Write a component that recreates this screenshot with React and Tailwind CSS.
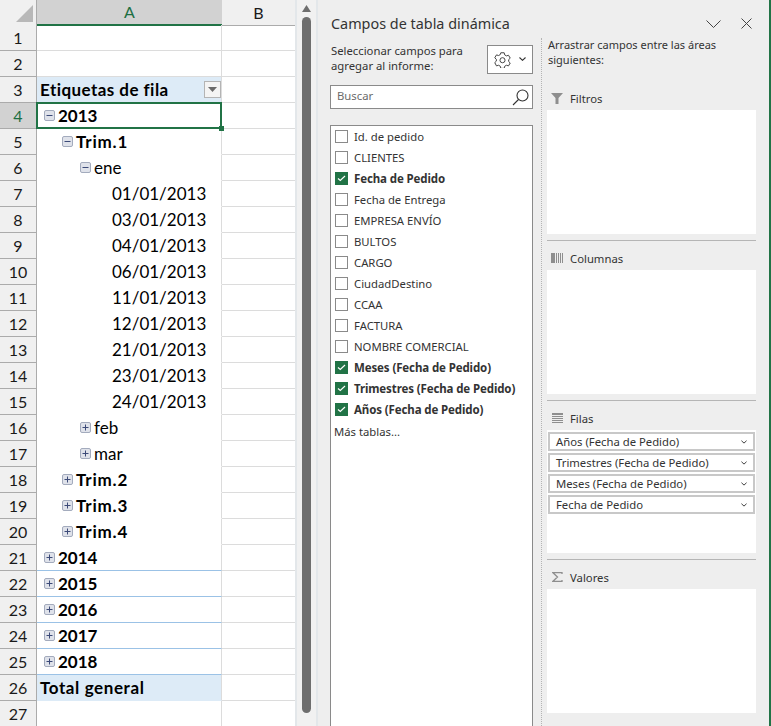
import React from 'react'

const sheetFont = "font-['Lato','Liberation_Sans',sans-serif]"
const panelFont = "font-['Noto_Sans','Liberation_Sans',sans-serif]"

const rows = [
  { n: 1 },
  { n: 2 },
  { n: 3, text: 'Etiquetas de fila', bold: true, track: 'tracking-[0.45px]', fill: true, filter: true },
  { n: 4, text: '2013', bold: true, level: 0, box: 'minus', selected: true },
  { n: 5, text: 'Trim.1', bold: true, track: 'tracking-[0.8px]', level: 1, box: 'minus' },
  { n: 6, text: 'ene', level: 2, box: 'minus' },
  { n: 7, text: '01/01/2013', date: true },
  { n: 8, text: '03/01/2013', date: true },
  { n: 9, text: '04/01/2013', date: true },
  { n: 10, text: '06/01/2013', date: true },
  { n: 11, text: '11/01/2013', date: true },
  { n: 12, text: '12/01/2013', date: true },
  { n: 13, text: '21/01/2013', date: true },
  { n: 14, text: '23/01/2013', date: true },
  { n: 15, text: '24/01/2013', date: true },
  { n: 16, text: 'feb', level: 2, box: 'plus' },
  { n: 17, text: 'mar', level: 2, box: 'plus' },
  { n: 18, text: 'Trim.2', bold: true, track: 'tracking-[0.8px]', level: 1, box: 'plus' },
  { n: 19, text: 'Trim.3', bold: true, track: 'tracking-[0.8px]', level: 1, box: 'plus' },
  { n: 20, text: 'Trim.4', bold: true, track: 'tracking-[0.8px]', level: 1, box: 'plus' },
  { n: 21, text: '2014', bold: true, level: 0, box: 'plus', blue: true },
  { n: 22, text: '2015', bold: true, level: 0, box: 'plus', blue: true },
  { n: 23, text: '2016', bold: true, level: 0, box: 'plus', blue: true },
  { n: 24, text: '2017', bold: true, level: 0, box: 'plus', blue: true },
  { n: 25, text: '2018', bold: true, level: 0, box: 'plus', blue: true },
  { n: 26, text: 'Total general', bold: true, track: 'tracking-[0.6px]', fill: true },
  { n: 27 },
]

const fields = [
  { label: 'Id. de pedido' },
  { label: 'CLIENTES' },
  { label: 'Fecha de Pedido', on: true },
  { label: 'Fecha de Entrega' },
  { label: 'EMPRESA ENVÍO' },
  { label: 'BULTOS' },
  { label: 'CARGO' },
  { label: 'CiudadDestino' },
  { label: 'CCAA' },
  { label: 'FACTURA' },
  { label: 'NOMBRE COMERCIAL' },
  { label: 'Meses (Fecha de Pedido)', on: true },
  { label: 'Trimestres (Fecha de Pedido)', on: true },
  { label: 'Años (Fecha de Pedido)', on: true },
]

const filas = [
  'Años (Fecha de Pedido)',
  'Trimestres (Fecha de Pedido)',
  'Meses (Fecha de Pedido)',
  'Fecha de Pedido',
]

// indent of the outline boxes, one step per pivot level
const levelPad = ['pl-[7px]', 'pl-[25px]', 'pl-[43px]']

function OutlineBox({ type }) {
  return (
    <svg width="11" height="11" viewBox="0 0 11 11" className="shrink-0 mr-[3px]">
      <rect x="0.5" y="0.5" width="10" height="10" rx="1.5" fill="#dfe2ea" stroke="#a3abbd" />
      <path d="M2.5 5.5h6" stroke="#3c4a78" />
      {type === 'plus' && <path d="M5.5 2.5v6" stroke="#3c4a78" />}
    </svg>
  )
}

function Row({ row }) {
  const { n, text, bold, track, fill, filter, level, box, selected, date, blue } = row
  let gridLine = 'border-b-white'
  if (n <= 2) gridLine = 'border-b-[#dcdcdc]'
  if (fill) gridLine = 'border-b-[#ddebf7]'
  if (blue) gridLine = 'border-b-[#9bc2e6]'
  return (
    <>
      <div
        className={`flex items-center justify-center h-[26px] border-b border-r border-[#ababab] text-[16px] ${
          selected ? 'bg-[#d2d2d2] text-[#1d6f42]' : 'bg-[#f0f0f0] text-[#1a1a1a]'
        }`}
      >
        {n}
      </div>
      <div
        className={`relative flex items-center h-[26px] border-b border-r border-r-[#dcdcdc] text-[17px] text-black ${gridLine} ${
          fill ? 'bg-[#ddebf7] pl-[3px]' : ''
        } ${date ? 'pl-[75px]' : ''} ${level !== undefined ? levelPad[level] : ''} ${bold ? 'font-bold' : ''} ${
          selected ? 'z-10' : ''
        }`}
      >
        {box && <OutlineBox type={box} />}
        <span className={`whitespace-nowrap ${track || ''}`}>{text}</span>
        {filter && (
          <span className="ml-auto flex items-center justify-center w-[17px] h-[17px] bg-[#f4f4f4] border border-[#b4b4b4]">
            <svg width="9" height="5" viewBox="0 0 9 5">
              <path d="M0 0h9L4.5 5z" fill="#6a6a6a" />
            </svg>
          </span>
        )}
        {selected && (
          <span className="absolute left-[-1px] right-[-1px] top-[-1px] bottom-[-1px] border-2 border-[#217346]">
            <span className="absolute right-[-4px] bottom-[-4px] w-[5px] h-[5px] bg-[#217346]" />
          </span>
        )}
      </div>
      <div className="h-[26px] border-b border-[#dcdcdc]" />
    </>
  )
}

function Sheet() {
  return (
    <div className={`w-[295px] shrink-0 bg-white ${sheetFont}`}>
      <div className="grid grid-cols-[37px_185px_73px] h-[25px] text-[16px]">
        <div className="flex items-end justify-end bg-[#f0f0f0] border-b border-r border-[#ababab] pr-[3px] pb-[3px]">
          <svg width="17" height="17" viewBox="0 0 17 17">
            <path d="M17 0v17H0z" fill="#b8b8b8" />
          </svg>
        </div>
        <div className="flex items-center justify-center bg-[#d2d2d2] text-[#1d6f42] border-b-2 border-[#217346]">A</div>
        <div className="flex items-center justify-center bg-[#f0f0f0] text-[#1a1a1a] border-b border-[#ababab]">B</div>
      </div>
      <div className="grid grid-cols-[37px_185px_73px]">
        {rows.map((r) => (
          <Row key={r.n} row={r} />
        ))}
      </div>
    </div>
  )
}

function Scrollbar() {
  return (
    <div className="w-[23px] shrink-0 flex flex-col items-center bg-[#f1f1f1] border-x-2 border-[#e3e7ea] pt-[5px]">
      <svg width="9" height="7" viewBox="0 0 9 7">
        <path d="M4.5 0L9 7H0z" fill="#6e6e6e" />
      </svg>
      <div className="mt-[5px] w-[9px] h-[696px] rounded-full bg-[#6e6e6e]" />
    </div>
  )
}

function Check({ on }) {
  if (on) {
    return (
      <span className="shrink-0 flex items-center justify-center w-[13px] h-[13px] bg-[#217346]">
        <svg width="9" height="7" viewBox="0 0 9 7" fill="none">
          <path d="M1 3.5l2.3 2L8 1" stroke="white" strokeWidth="1.2" />
        </svg>
      </span>
    )
  }
  return <span className="shrink-0 w-[13px] h-[13px] bg-white border border-[#8a8a8a]" />
}

function Gear() {
  return (
    <svg width="17" height="17" viewBox="0 0 24 24" fill="none" stroke="#444" strokeWidth="1.4">
      <path d="M9.6 2.5h4.8l.7 3 2.4 1.4 3-.9 2.4 4.1-2.2 2.1v2.6l2.2 2.1-2.4 4.1-3-.9-2.4 1.4-.7 3H9.6l-.7-3-2.4-1.4-3 .9L1.100 16.400l2.2-2.100v-2.600L1.100 9.600l2.400-4.100 3 .9 2.400-1.400z" />
      <circle cx="12" cy="13" r="3.600" />
    </svg>
  )
}

function Chevron({ w = 7, h = 4, color = '#333' }) {
  return (
    <svg width={w} height={h} viewBox="0 0 7 4" fill="none">
      <path d="M.5.5L3.500 3.300 6.500.5" stroke={color} strokeWidth="1.100" />
    </svg>
  )
}

function FieldList() {
  return (
    <div className="w-[203px] shrink-0">
      <div className="flex items-center justify-between h-[34px] mt-[4px] text-[11.3px] leading-[15px] text-[#333]">
        <p className="-mt-[2px] pl-px">
          Seleccionar campos para
          <br />
          agregar al informe:
        </p>
        <div className="flex items-center gap-[8px] justify-center w-[46px] h-[29px] bg-white border border-[#8a8a8a]">
          <Gear />
          <Chevron />
        </div>
      </div>
      <div className="flex items-center justify-between h-[24px] mt-[9px] pl-[6px] pr-[3px] bg-white border border-[#8a8a8a] text-[11.3px] text-[#6b6b6b]">
        <span className="-translate-y-px">Buscar</span>
        <svg width="17" height="17" viewBox="0 0 17 17" fill="none" stroke="#333" strokeWidth="1.100">
          <circle cx="10.500" cy="6.500" r="5.500" />
          <path d="M6.500 10.500L1 16" />
        </svg>
      </div>
      <div className="h-[620px] mt-[16px] bg-white border border-[#8a8a8a] text-[11.3px] text-[#333]">
        {fields.map((f) => (
          <div
            key={f.label}
            className={`flex items-center h-[21px] gap-[6px] pl-[4px] ${f.on ? 'font-bold text-[11.5px] tracking-[-0.12px]' : ''}`}
          >
            <Check on={f.on} />
            <span className={`whitespace-nowrap ${f.on ? '' : 'translate-y-px'}`}>{f.label}</span>
          </div>
        ))}
        <div className="h-[21px] mt-px pl-[3px] leading-[21px]">Más tablas...</div>
      </div>
    </div>
  )
}

function AreaIcon({ type }) {
  if (type === 'filter') {
    return (
      <svg width="12" height="11" viewBox="0 0 12 11">
        <path d="M0 0h12L7.500 5v6h-3V5z" fill="#8e8e8e" />
      </svg>
    )
  }
  if (type === 'columns') {
    return (
      <svg width="12" height="10" viewBox="0 0 12 10" fill="#8e8e8e">
        <rect x="0" width="4" height="10" />
        <rect x="5" width="1" height="10" />
        <rect x="7" width="1" height="10" />
        <rect x="9" width="1" height="10" />
        <rect x="11" width="1" height="10" />
      </svg>
    )
  }
  if (type === 'rows') {
    return (
      <svg width="11" height="10" viewBox="0 0 11 10" fill="#8e8e8e">
        <rect y="0" width="11" height="2" />
        <rect y="3" width="11" height="1" />
        <rect y="5" width="11" height="1" />
        <rect y="7" width="11" height="1" />
        <rect y="9" width="11" height="1" />
      </svg>
    )
  }
  return (
    <svg width="11" height="10" viewBox="0 0 11 10" fill="none" stroke="#8e8e8e" strokeWidth="1.300">
      <path d="M10 2V.700H1l4.500 4.300L1 9.300h9V8" />
    </svg>
  )
}

function Area({ icon, label, divider, boxClass = 'h-[124px]', children }) {
  return (
    <div>
      {divider && <div className="mt-[6px] mb-[5px] h-px bg-[#b5b5b5]" />}
      <div className="flex items-center h-[24px] pl-[4px] text-[11.3px] text-[#333]">
        <span className="flex justify-center w-[12px] mr-[7px]">
          <AreaIcon type={icon} />
        </span>
        <span className="translate-y-px">{label}</span>
      </div>
      <div className={`${boxClass} bg-white pt-[2px] px-[1px]`}>{children}</div>
    </div>
  )
}

function Panel() {
  return (
    <div className={`flex-1 min-w-0 flex flex-col bg-[#eeeeee] border-r-2 border-[#217346] pl-[12px] ${panelFont}`}>
      <div className="flex items-center h-[38px] shrink-0 pt-[9px] pr-[17px]">
        <h2 className="pl-px text-[14.4px] text-[#333]">Campos de tabla dinámica</h2>
        <svg className="ml-auto" width="15" height="8" viewBox="0 0 15 8" fill="none" stroke="#444">
          <path d="M.5.5l7 7 7-7" />
        </svg>
        <svg className="ml-[20px]" width="11" height="11" viewBox="0 0 11 11" fill="none" stroke="#444">
          <path d="M.5.5l10 10M10.500.5l-10 10" />
        </svg>
      </div>
      <div className="flex">
        <FieldList />
        <div className="ml-[8px] mr-[5px] border-l border-dotted border-[#b4b4b4] h-[688px]" />
        <div className="w-[209px] shrink-0">
          <p className="h-[48px] -mt-px mb-px pl-px text-[11px] leading-[15px] text-[#333]">
            Arrastrar campos entre las áreas
            <br />
            siguientes:
          </p>
          <Area icon="filter" label="Filtros" />
          <Area icon="columns" label="Columnas" divider />
          <Area icon="rows" label="Filas" divider boxClass="h-[123px]">
            {filas.map((f) => (
              <div
                key={f}
                className="flex items-center justify-between h-[19px] mb-[2px] pl-[6px] pr-[6px] border-2 border-[#c8c8c8] text-[11.3px] text-[#333]"
              >
                <span className="whitespace-nowrap translate-y-px">{f}</span>
                <Chevron w={6} h={4} />
              </div>
            ))}
          </Area>
          <Area icon="sum" label="Valores" divider />
        </div>
      </div>
    </div>
  )
}

export default function App() {
  return (
    <div className="flex w-[771px] h-[726px] overflow-hidden">
      <Sheet />
      <Scrollbar />
      <Panel />
    </div>
  )
}
